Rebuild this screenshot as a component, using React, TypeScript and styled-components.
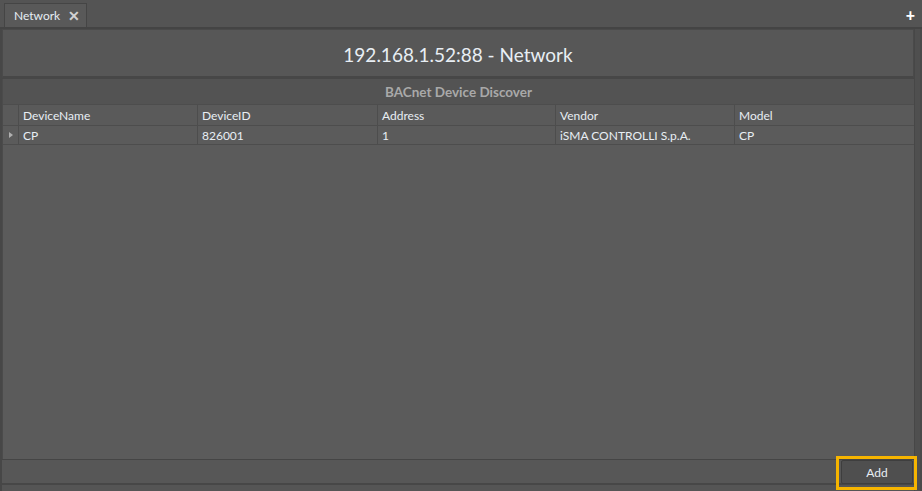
import React from "react";
import styled, { createGlobalStyle } from "styled-components";

const Global = createGlobalStyle`
  html, body { margin: 0; padding: 0; background: #555555; }
  body { font-family: Lato, "Open Sans", sans-serif; }
  * { box-sizing: border-box; }
`;

const Frame = styled.div`
  width: 922px;
  height: 491px;
  display: flex;
  flex-direction: column;
  background: #555555;
  overflow: hidden;
`;

const TabBar = styled.div`
  height: 29px;
  display: flex;
  align-items: flex-end;
  padding-left: 4px;
  padding-right: 7px;
  border-bottom: 2px solid #444444;
  background: #545454;
`;

const Tab = styled.div`
  height: 24px;
  width: 83px;
  display: flex;
  align-items: center;
  justify-content: space-between;
  padding: 0 6px 0 9px;
  background: #595959;
  border: 1px solid #454545;
  border-bottom: none;
  color: #e6edf3;
  font-size: 12px;
`;

const Close = styled.span`
  color: #d2d2d2;
  font-weight: 900;
  font-size: 14px;
  line-height: 1;
`;

const Plus = styled.span`
  margin-left: auto;
  align-self: center;
  color: #ffffff;
  font-weight: 900;
  font-size: 16px;
  line-height: 1;
  margin-top: 2px;
`;

const Body = styled.div`
  flex: 1;
  display: flex;
  min-height: 0;
`;

const Main = styled.div`
  flex: 1;
  display: flex;
  flex-direction: column;
  border-left: 2px solid #474747;
  min-width: 0;
`;

const SideStrip = styled.div`
  width: 8px;
  background: #4f4f4f;
  border-left: 1px solid #474747;
  border-right: 2px solid #4a4a4a;
`;

const TitleBox = styled.div`
  height: 50px;
  display: flex;
  align-items: center;
  justify-content: center;
  padding-top: 2px;
  background: #575757;
  border: 1px solid #4a4a4a;
  color: #e8eef4;
  font-size: 19px;
  border-bottom: 3px solid #474747;
`;

const Grid = styled.div`
  flex: 1;
  display: flex;
  flex-direction: column;
  background: #5b5b5b;
  border-left: 1px solid #4b4b4b;
  min-height: 0;
`;

const Caption = styled.div`
  height: 25px;
  display: flex;
  align-items: center;
  justify-content: center;
  background: #535353;
  color: #a9a9a9;
  font-weight: 700;
  font-size: 13.5px;
`;

const Row = styled.div<{ $header?: boolean }>`
  display: grid;
  grid-template-columns: 15px 179px 180px 178px 179px 1fr;
  height: ${(p) => (p.$header ? "22px" : "19px")};
  background: ${(p) => (p.$header ? "#5a5a5a" : "#5b5b5b")};
  border-top: ${(p) => (p.$header ? "1px solid #4d4d4d" : "none")};
  border-bottom: 1px solid #4d4d4d;
`;

const Cell = styled.div`
  display: flex;
  align-items: center;
  padding-left: 4px;
  border-left: 1px solid #4d4d4d;
  color: #e8eef4;
  font-size: 12px;
  white-space: nowrap;
  overflow: hidden;
  &:first-child {
    border-left: none;
    padding-left: 0;
    justify-content: center;
  }
`;

const Arrow = styled.span`
  width: 0;
  height: 0;
  border-top: 3px solid transparent;
  border-bottom: 3px solid transparent;
  border-left: 4px solid #b0b0b0;
  margin-left: 1px;
`;

const Fill = styled.div`
  flex: 1;
`;

const BottomBar = styled.div`
  height: 26px;
  display: flex;
  align-items: center;
  justify-content: flex-end;
  border-top: 1px solid #454545;
  background: #575757;
  border-bottom: 2px solid #474747;
  padding-right: 1px;
  position: relative;
`;

const Highlight = styled.div`
  position: absolute;
  right: -3px;
  top: -4px;
  width: 81px;
  height: 34px;
  border: 3px solid #f7b500;
  pointer-events: none;
`;

const AddButton = styled.button`
  width: 72px;
  height: 24px;
  background: #4f4f4f;
  border: 1px solid #3e3e3e;
  border-radius: 2px;
  color: #e8eef4;
  font-family: Lato, sans-serif;
  font-size: 12px;
  padding: 0;
  margin-top: 1px;
`;

const FootStrip = styled.div`
  height: 6px;
  background: #555555;
`;

const columns = ["DeviceName", "DeviceID", "Address", "Vendor", "Model"];
const rows = [["CP", "826001", "1", "iSMA CONTROLLI S.p.A.", "CP"]];

export default function App() {
  return (
    <Frame>
      <Global />
      <TabBar>
        <Tab>
          <span>Network</span>
          <Close>✕</Close>
        </Tab>
        <Plus>+</Plus>
      </TabBar>
      <Body>
        <Main>
          <TitleBox>192.168.1.52:88 - Network</TitleBox>
          <Grid>
            <Caption>BACnet Device Discover</Caption>
            <Row $header>
              <Cell />
              {columns.map((c) => (
                <Cell key={c}>{c}</Cell>
              ))}
            </Row>
            {rows.map((r, i) => (
              <Row key={i}>
                <Cell>
                  <Arrow />
                </Cell>
                {r.map((v, j) => (
                  <Cell key={j}>{v}</Cell>
                ))}
              </Row>
            ))}
            <Fill />
          </Grid>
          <BottomBar>
            <AddButton>Add</AddButton>
            <Highlight />
          </BottomBar>
          <FootStrip />
        </Main>
        <SideStrip />
      </Body>
    </Frame>
  );
}
